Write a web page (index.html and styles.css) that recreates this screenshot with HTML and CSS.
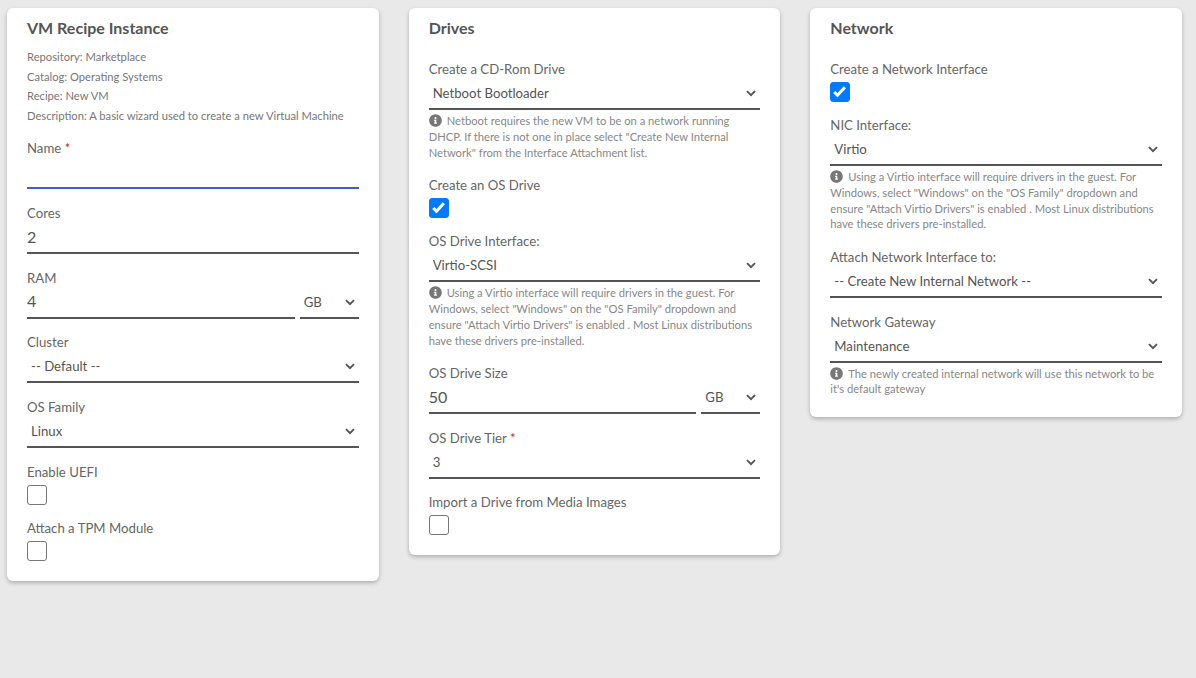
FILE: index.html
```html
<!DOCTYPE html>
<html lang="en">

<head>
    <meta charset="UTF-8">
    <meta name="viewport" content="width=device-width, initial-scale=1.0">
    <title>VM Recipe Instance</title>
    <link rel="stylesheet" href="styles.css">
</head>

<body>
    <svg class="defs" width="0" height="0">
        <symbol id="info" viewBox="0 0 512 512">
            <path d="M256 8C119 8 8 119.1 8 256c0 137 111 248 248 248s248-111 248-248C504 119.1 393 8 256 8zm0 110c23.2 0 42 18.8 42 42s-18.8 42-42 42-42-18.8-42-42 18.8-42 42-42zm56 254c0 6.6-5.4 12-12 12h-88c-6.6 0-12-5.4-12-12v-24c0-6.6 5.4-12 12-12h12v-64h-12c-6.6 0-12-5.4-12-12v-24c0-6.6 5.4-12 12-12h64c6.6 0 12 5.4 12 12v100h12c6.6 0 12 5.4 12 12v24z" />
        </symbol>
    </svg>
    <div class="columns">
        <div class="card">
            <h2 class="cardTitle">VM Recipe Instance</h2>
            <div class="meta">
                <p>Repository: Marketplace</p>
                <p>Catalog: Operating Systems</p>
                <p>Recipe: New VM</p>
                <p>Description: A basic wizard used to create a new Virtual Machine</p>
            </div>
            <div class="field">
                <label>Name <span class="required">*</span></label>
                <input class="textInput focused" type="text">
            </div>
            <div class="field">
                <label>Cores</label>
                <input class="textInput" type="text" value="2">
            </div>
            <div class="field">
                <label>RAM</label>
                <div class="sizeRow">
                    <input class="textInput" type="text" value="4">
                    <select class="unit">
                        <option>GB</option>
                    </select>
                </div>
            </div>
            <div class="field">
                <label>Cluster</label>
                <select>
                    <option>-- Default --</option>
                </select>
            </div>
            <div class="field">
                <label>OS Family</label>
                <select>
                    <option>Linux</option>
                </select>
            </div>
            <div class="checkField">
                <label>Enable UEFI</label>
                <input type="checkbox">
            </div>
            <div class="checkField">
                <label>Attach a TPM Module</label>
                <input type="checkbox">
            </div>
        </div>

        <div class="card">
            <h2 class="cardTitle">Drives</h2>
            <div class="field">
                <label>Create a CD-Rom Drive</label>
                <select>
                    <option>Netboot Bootloader</option>
                </select>
                <p class="help"><svg class="infoIcon"><use href="#info" /></svg>Netboot requires the new VM to be on a network running DHCP. If there is not one in place select "Create New Internal Network" from the Interface Attachment list.</p>
            </div>
            <div class="checkField">
                <label>Create an OS Drive</label>
                <input type="checkbox" checked>
            </div>
            <div class="field">
                <label>OS Drive Interface:</label>
                <select>
                    <option>Virtio-SCSI</option>
                </select>
                <p class="help"><svg class="infoIcon"><use href="#info" /></svg>Using a Virtio interface will require drivers in the guest. For Windows, select "Windows" on the "OS Family" dropdown and ensure "Attach Virtio Drivers" is enabled . Most Linux distributions have these drivers pre-installed.</p>
            </div>
            <div class="field">
                <label>OS Drive Size</label>
                <div class="sizeRow">
                    <input class="textInput" type="text" value="50">
                    <select class="unit">
                        <option>GB</option>
                    </select>
                </div>
            </div>
            <div class="field">
                <label>OS Drive Tier <span class="required">*</span></label>
                <select>
                    <option>3</option>
                </select>
            </div>
            <div class="checkField">
                <label>Import a Drive from Media Images</label>
                <input type="checkbox">
            </div>
        </div>

        <div class="card">
            <h2 class="cardTitle">Network</h2>
            <div class="checkField">
                <label>Create a Network Interface</label>
                <input type="checkbox" checked>
            </div>
            <div class="field">
                <label>NIC Interface:</label>
                <select>
                    <option>Virtio</option>
                </select>
                <p class="help"><svg class="infoIcon"><use href="#info" /></svg>Using a Virtio interface will require drivers in the guest. For Windows, select "Windows" on the "OS Family" dropdown and ensure "Attach Virtio Drivers" is enabled . Most Linux distributions have these drivers pre-installed.</p>
            </div>
            <div class="field">
                <label>Attach Network Interface to:</label>
                <select>
                    <option>-- Create New Internal Network --</option>
                </select>
            </div>
            <div class="field">
                <label>Network Gateway</label>
                <select>
                    <option>Maintenance</option>
                </select>
                <p class="help"><svg class="infoIcon"><use href="#info" /></svg>The newly created internal network will use this network to be it's default gateway</p>
            </div>
        </div>
    </div>
</body>

</html>
```

FILE: styles.css
```css
* {
    margin: 0;
    box-sizing: border-box;
    padding: 0;
}

body {
    min-height: 100vh;
    background-color: #e9e9e9;
    font-family: "Lato", "Noto Sans", sans-serif;
    color: #666;
}

.defs {
    position: absolute;
}

.columns {
    display: grid;
    grid-template-columns: repeat(3, 371.67px);
    column-gap: 30px;
    align-items: start;
    padding: 8px 0 0 7px;
}

.card {
    background-color: #fff;
    border-radius: 6px;
    box-shadow: 0 2px 4px rgba(0, 0, 0, 0.25);
    padding: 9px 20px 20px;
}

.cardTitle {
    height: 22px;
    margin-bottom: 20px;
    font-size: 16px;
    line-height: 22px;
    font-weight: 700;
    color: #555;
}

.meta {
    margin-top: -12px;
    margin-bottom: 13px;
    font-size: 11.2px;
    line-height: 19.6px;
    color: #777;
}

.field {
    margin-bottom: 13.67px;
}

.field label,
.checkField label {
    display: block;
    height: 21px;
    font-size: 13.2px;
    line-height: 21.4px;
    color: #666;
}

.required {
    color: #a33;
}

.textInput,
select {
    display: block;
    width: 100%;
    height: 30px;
    border: 0;
    border-bottom: 2px solid #555;
    border-radius: 0;
    outline: 0;
    background-color: transparent;
    font-family: inherit;
    color: #555;
}

.textInput {
    padding-bottom: 4px;
    font-size: 16px;
}

.textInput.focused {
    border-bottom-color: #3f5fcf;
}

select {
    appearance: none;
    padding-left: 4px;
    padding-bottom: 2px;
    font-size: 13.2px;
    background-image: url("data:image/svg+xml,%3Csvg xmlns='http://www.w3.org/2000/svg' viewBox='0 0 10 7'%3E%3Cpath d='M1 1.2l4 4 4-4' fill='none' stroke='%23555' stroke-width='1.9'/%3E%3C/svg%3E");
    background-repeat: no-repeat;
    background-size: 10px 7px;
    background-position: right 4px top 10px;
}

.sizeRow {
    display: flex;
    gap: 5px;
}

.sizeRow .textInput {
    flex: 1;
    min-width: 0;
}

.sizeRow .unit {
    width: 59px;
    flex: none;
}

.help {
    margin-top: 3px;
    margin-bottom: 14.8px;
    font-size: 11.2px;
    line-height: 15.8px;
    color: #888;
}

.infoIcon {
    width: 13px;
    height: 13px;
    margin-right: 5px;
    vertical-align: -2px;
    fill: #777;
}

.checkField {
    margin-bottom: 13px;
}

.checkField input {
    display: block;
    width: 20px;
    height: 20px;
    margin-top: 2px;
    appearance: none;
    border: 1px solid #777;
    border-radius: 3px;
    background-color: #fff;
}

.checkField input:checked {
    border-color: #007bff;
    background-color: #007bff;
    background-image: url("data:image/svg+xml,%3Csvg xmlns='http://www.w3.org/2000/svg' viewBox='0 0 20 20'%3E%3Cpath d='M3.6 10l3.6 3.6 8.2-8.8' fill='none' stroke='%23fff' stroke-width='3.4'/%3E%3C/svg%3E");
    background-position: center;
}

.card > :last-child {
    margin-bottom: 0;
}

.card > .field:last-child .help {
    margin-bottom: 0;
}
```
